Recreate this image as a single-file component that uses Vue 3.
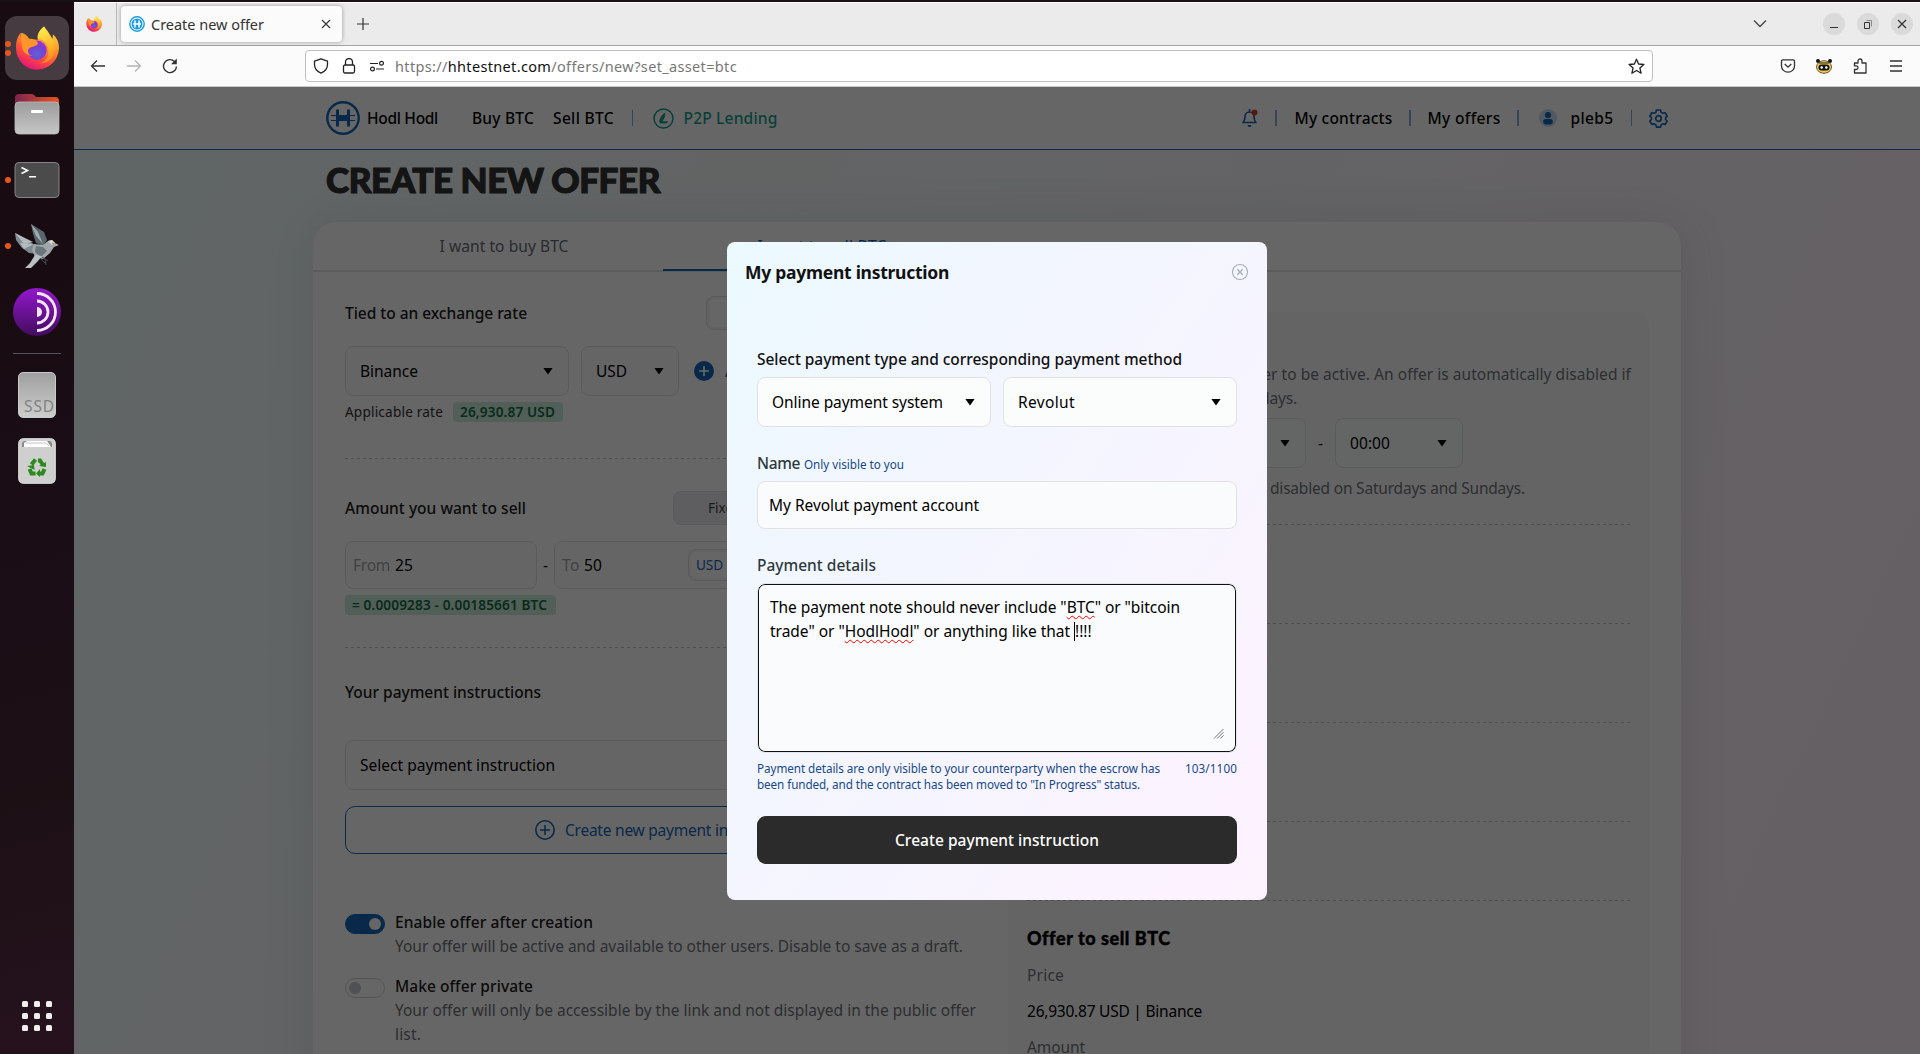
<script setup>
// Tracks a label so that it occupies the given width in pixels.
const vFit = {
  mounted(el, { value }) {
    const natural = el.getBoundingClientRect().width
    const count = el.textContent.length
    el.style.letterSpacing = ((value - natural) / count).toFixed(3) + 'px'
  }
}
const dots = [0, 1, 2, 3, 4, 5, 6, 7, 8]
</script>

<template>
  <div class="desktop">
    <svg width="0" height="0" class="defs">
      <defs>
        <linearGradient id="ffBody" x1="0.8" y1="0" x2="0.3" y2="1">
          <stop offset="0" stop-color="#ffe14a" /><stop offset="0.35" stop-color="#ff9a2a" />
          <stop offset="0.7" stop-color="#ff4a3f" /><stop offset="1" stop-color="#e3117c" />
        </linearGradient>
        <linearGradient id="ffFlame" x1="0.3" y1="0" x2="0.6" y2="1">
          <stop offset="0" stop-color="#fff44f" /><stop offset="0.55" stop-color="#ffc02f" /><stop offset="1" stop-color="#ff8a1f" />
        </linearGradient>
        <radialGradient id="ffGlobe" cx="0.5" cy="0.7" r="0.7">
          <stop offset="0" stop-color="#5a63d8" /><stop offset="0.6" stop-color="#7a3fd0" /><stop offset="1" stop-color="#a033e0" />
        </radialGradient>
        <linearGradient id="folderBack" x1="0" y1="0" x2="1" y2="0">
          <stop offset="0" stop-color="#7c2450" /><stop offset="1" stop-color="#e9541f" />
        </linearGradient>
        <linearGradient id="greyFace" x1="0" y1="0" x2="0" y2="1">
          <stop offset="0" stop-color="#9c9c9c" /><stop offset="1" stop-color="#c6c6c6" />
        </linearGradient>
        <linearGradient id="tor" x1="0" y1="0" x2="0" y2="1">
          <stop offset="0" stop-color="#9318cf" /><stop offset="1" stop-color="#420c5d" />
        </linearGradient>
        <symbol id="firefox" viewBox="0 0 50 50">
          <path d="M33 0c-6 5-8 10-7 15L8 14c-2-2-2-4-1-7C2 11 0 20 2 31c3 11 13 19 24 18 14-1 23-11 24-24 0-7-2-12-7-16 0 3 0 4-1 6-2-7-6-11-9-15z" fill="url(#ffBody)" />
          <path d="M33 0c-5 4-8 9-7 14 8 1 13 8 12 17-1 5-5 10-10 11 11 0 19-8 18-20-1-9-10-14-13-22z" fill="url(#ffFlame)" opacity=".85" />
          <circle cx="25" cy="27" r="11" fill="url(#ffGlobe)" />
          <path d="M7 7c4 1 7 3 9 7 5 0 10 2 10 6-3 4-8 2-11 6-1 4 2 7 6 7-7 1-14-5-13-12C6 16 6 11 7 7z" fill="#ff9429" />
        </symbol>
      </defs>
    </svg>

    <aside class="dock">
      <div class="dock-item">
        <span class="run run-a"></span><span class="run run-b"></span>
        <div class="dock-active"><svg width="44" height="45"><use href="#firefox" /></svg></div>
      </div>
      <div class="dock-item">
        <svg width="46" height="42" viewBox="0 0 46 42">
          <path d="M1 12V5q0-4 4-4h12q2 0 3 1l2 2h19q4 0 4 4v8H1z" fill="url(#folderBack)" />
          <rect x="1" y="9" width="44" height="32" rx="4" fill="url(#greyFace)" stroke="#bdbdbd" stroke-width=".8" />
          <rect x="17" y="17" width="12" height="3" rx="1" fill="#fff" />
        </svg>
      </div>
      <div class="dock-item">
        <span class="run"></span>
        <svg width="46" height="38" viewBox="0 0 46 38">
          <rect x="1" y="1.5" width="44" height="35" rx="4" fill="#4b4b4b" stroke="#858585" />
          <path d="M7.500 6.500l6 3-6 3M15 15.700h7" fill="none" stroke="#fff" stroke-width="1.600" />
        </svg>
      </div>
      <div class="dock-item">
        <span class="run"></span>
        <svg width="44" height="44" viewBox="0 0 44 44">
          <path d="M0 9l20 12 3 9-9-1-4-3-3-2-3-4-3-4z" fill="#7f8a90" />
          <path d="M0 9l18 9-9 2zM5 19l14 1-10 5z" fill="#b3bbbe" />
          <path d="M16 0l13 8 3 8-4 6-7-3-3-9z" fill="#58666d" />
          <path d="M16 0l7 8 5 12-7-8z" fill="#a1abae" />
          <path d="M19 20l9 1 5-4 4-1 3 3 4 2-5 2-4 6-7 6-8-2-3-7z" fill="#9fa7aa" />
          <path d="M21 22l7 1 4 4-6 6-6-5z" fill="#6a757b" />
          <path d="M33 17l4-1 3 3-3 2z" fill="#d7d9d9" />
          <circle cx="38" cy="19.500" r="1" fill="#c58b3c" />
          <path d="M20 31l7 1-4 5-7 7h-6l5-5z" fill="#b7c0c3" />
          <path d="M27 33l6 4M26 35l5 5M30 35l1 6" stroke="#3e4a50" fill="none" />
        </svg>
      </div>
      <div class="dock-item">
        <svg width="48" height="48" viewBox="0 0 48 48">
          <circle cx="24" cy="24" r="24" fill="url(#tor)" />
          <path d="M24 5.500a18.500 18.500 0 010 37M24 13a11 11 0 010 22" fill="none" stroke="#f3e6fb" stroke-width="2.800" />
          <path d="M24 19a5 5 0 010 10z" fill="#f3e6fb" />
        </svg>
      </div>
      <div class="dock-sep"></div>
      <div class="dock-item">
        <div class="ssd"><span v-fit="31">SSD</span></div>
      </div>
      <div class="dock-item">
        <svg width="38" height="46" viewBox="0 0 38 46">
          <rect x=".7" y=".7" width="36.600" height="44.600" rx="4.500" fill="#cfcfcf" stroke="#e2e2e2" />
          <path d="M4 9V6q0-3 3-3h24q3 0 3 3v3z" fill="#8a8a8a" />
          <path d="M6 9V5l3-2h20l4 6z" fill="#fff" /><path d="M8 5h20l3 3" fill="none" stroke="#aaa" stroke-width=".7" />
          <g fill="none" stroke="#2b8a1e" stroke-width="4">
            <path d="M13.500 26.500l4-5" /><path d="M20 22.500h2l3 4.500" />
            <path d="M26.500 31l-2 4.500h-4" /><path d="M17.500 35.500h-4l-2-4.500" />
          </g>
          <path d="M21 28l7 1v-5zM22 31v8l-4-3.500zM9 28l7-1 .5 5z" fill="#2b8a1e" />
        </svg>
      </div>
      <div class="app-grid"><i v-for="d in dots" :key="d"></i></div>
    </aside>

    <div class="window">
      <div class="tabbar">
        <div class="pinned"><svg width="16" height="16"><use href="#firefox" /></svg></div>
        <div class="tab">
          <svg width="16" height="16" viewBox="0 0 16 16"><circle cx="8" cy="8" r="7.200" fill="#fff" stroke="#1d9bdf" stroke-width="1.400" /><circle cx="8" cy="8" r="5.500" fill="#1d9bdf" /><path d="M6 4.500v7M10 4.500v7M4 8h8" stroke="#fff" stroke-width="1.500" /></svg>
          <span class="tab-title"><span v-fit="113">Create new offer</span></span>
          <svg width="10" height="10" viewBox="0 0 10 10" stroke="#333" stroke-width="1.100"><path d="M1 1l8 8M9 1L1 9" /></svg>
        </div>
        <svg class="plus" width="12" height="12" viewBox="0 0 12 12" stroke="#333" stroke-width="1.200"><path d="M6 0v12M0 6h12" /></svg>
        <svg class="all-tabs" width="14" height="10" viewBox="0 0 14 10" fill="none" stroke="#444" stroke-width="1.300"><path d="M1 1.500l6 6 6-6" /></svg>
        <div class="controls">
          <span><svg width="10" height="10" viewBox="0 0 10 10" stroke="#333"><path d="M1 8.500h8" /></svg></span>
          <span><svg width="10" height="10" viewBox="0 0 10 10" fill="none" stroke="#333"><path d="M1.500 3.500h5v6h-5z" /><path d="M3.500 1.500h5v6" stroke="#888" /></svg></span>
          <span><svg width="10" height="10" viewBox="0 0 10 10" stroke="#333" stroke-width="1.200"><path d="M1 1l8 8M9 1L1 9" /></svg></span>
        </div>
      </div>
      <div class="toolbar">
        <div class="nav-icons">
          <svg width="16" height="16" viewBox="0 0 16 16" fill="none" stroke="#333" stroke-width="1.300"><path d="M15 8H1.500M7 2.500L1.500 8 7 13.500" /></svg>
          <svg width="16" height="16" viewBox="0 0 16 16" fill="none" stroke="#b4b4b4" stroke-width="1.300"><path d="M1 8h13.500M9 2.500L14.500 8 9 13.500" /></svg>
          <svg width="16" height="16" viewBox="0 0 16 16"><path d="M14.500 8.500A6.500 6.500 0 1112.500 3.400" fill="none" stroke="#333" stroke-width="1.400" /><path d="M14.800.5v5.800H9z" fill="#333" /></svg>
        </div>
        <div class="urlbar">
          <svg width="16" height="16" viewBox="0 0 16 16" fill="none" stroke="#222" stroke-width="1.300"><path d="M8 .9l6.500 2.200v3.500c0 4-2.500 7-6.500 8.600C4 13.600 1.500 10.600 1.500 6.600V3.100z" stroke-linejoin="round" /></svg>
          <svg width="16" height="16" viewBox="0 0 16 16" fill="none" stroke="#222" stroke-width="1.300"><rect x="2.500" y="7" width="11" height="8" rx="1.500" /><path d="M4.500 7V4a3.500 3.500 0 017 0v3" /></svg>
          <svg width="16" height="16" viewBox="0 0 16 16" fill="none" stroke="#222" stroke-width="1.200"><path d="M1 5.500h8M7 11h8" /><circle cx="12.500" cy="5.300" r="1.900" /><circle cx="3.500" cy="11" r="1.900" /></svg>
          <span class="url"><span v-fit="342">https://<b>hhtestnet.com</b>/offers/new?set_asset=btc</span></span>
          <svg class="star" width="17" height="17" viewBox="0 0 17 17" fill="none" stroke="#222" stroke-width="1.300" stroke-linejoin="round"><path d="M8.500 1.200l2.100 4.800 5.300.5-4 3.500 1.200 5.200-4.600-2.700-4.600 2.700L5.100 10l-4-3.500L6.400 6z" /></svg>
        </div>
        <div class="tools">
          <svg width="16" height="16" viewBox="0 0 16 16" fill="none" stroke="#333" stroke-width="1.300"><path d="M1.500 3q0-1.200 1.200-1.200h10.600q1.200 0 1.200 1.200v5a6.500 6.200 0 01-13 0z" /><path d="M4.700 6L8 9.200 11.300 6" /></svg>
          <svg width="18" height="16" viewBox="0 0 18 16"><circle cx="3" cy="3" r="2" fill="#111" /><circle cx="15" cy="3" r="2" fill="#111" /><ellipse cx="9" cy="9" rx="7.500" ry="6.300" fill="#efc94b" stroke="#222" stroke-width=".7" /><path d="M4 5h10" stroke="#222" /><rect x="3.500" y="6.500" width="11" height="6" rx="3" fill="#111" /><circle cx="6.700" cy="9.500" r="1.300" fill="#fff" /><circle cx="11.300" cy="9.500" r="1.300" fill="#fff" /></svg>
          <svg width="16" height="16" viewBox="0 0 16 16" fill="none" stroke="#333" stroke-width="1.300" stroke-linejoin="round"><path d="M6 5V3a2 2 0 014 0v2h4v10H2.500v-3.500h1.700a1.800 1.800 0 000-3.600H2.500V5z" /></svg>
          <svg width="16" height="16" viewBox="0 0 16 16" stroke="#333" stroke-width="1.300"><path d="M2 3h12M2 8h12M2 13h12" /></svg>
        </div>
      </div>

      <div class="page">
        <header class="site-header">
          <svg class="logo" width="34" height="34" viewBox="0 0 34 34" fill="none" stroke="#1668b8"><circle cx="17" cy="17" r="15.700" stroke-width="2.400" /><path d="M11.500 8.500v17M22.500 8.500v17" stroke-width="3" /><path d="M5 14.500h24M5 19.500h24" stroke-width="1.100" /><path d="M11.500 17h11" stroke-width="4" /></svg>
          <div class="h-cell brand"><span v-fit="71">Hodl Hodl</span></div>
          <div class="h-cell buy"><span v-fit="62">Buy BTC</span></div>
          <div class="h-cell sell"><span v-fit="61">Sell BTC</span></div>
          <i class="bar bar-left"></i>
          <svg class="lend-icon" width="21" height="21" viewBox="0 0 21 21"><circle cx="10.500" cy="10.500" r="9.500" fill="none" stroke="#14a08c" stroke-width="1.500" /><path d="M12.300 4.500c-3 1.500-5.300 5-6 8.200-.3 1.900.7 2.800 2.500 2.800h4.800l1.700-2.300H9.500c1.700-2 3-5 2.800-8.700z" fill="#14a08c" /></svg>
          <div class="h-cell lend"><span v-fit="94">P2P Lending</span></div>
          <svg class="bell" width="18" height="20" viewBox="0 0 18 20"><path d="M2 14.500c2-2 2-4 2-6a4.500 4.500 0 019 0c0 2 0 4 2 6z" fill="none" stroke="#1668b8" stroke-width="1.700" stroke-linejoin="round" /><path d="M6.500 17h4a2 2 0 01-4 0zM7.700 1h1.600v3H7.700z" fill="#1668b8" /><circle cx="13.500" cy="4.500" r="3" fill="#d8422a" /></svg>
          <i class="bar b1"></i>
          <div class="h-cell c1"><span v-fit="98">My contracts</span></div>
          <i class="bar b2"></i>
          <div class="h-cell c2"><span v-fit="73">My offers</span></div>
          <i class="bar b2"></i>
          <svg class="avatar" width="18" height="18" viewBox="0 0 18 18"><circle cx="9" cy="9" r="9" fill="#c9dcf0" /><circle cx="9" cy="6" r="3.100" fill="#1668b8" /><rect x="4.200" y="10" width="9.600" height="5.500" rx="2.750" fill="#1668b8" /></svg>
          <div class="h-cell c3"><span v-fit="43">pleb5</span></div>
          <i class="bar b3"></i>
          <svg class="gear" width="19" height="19" viewBox="0 0 19 19" fill="none" stroke="#1668b8" stroke-width="1.700" stroke-linejoin="round"><path d="M7.500 1h4l.6 2.200 1.900 1.100 2.200-.6 2 3.400L16.600 8.700v1.800l1.600 1.500-2 3.400-2.200-.6-1.900 1.100-.6 2.200h-4l-.6-2.200L5 14.800l-2.200.6-2-3.400 1.600-1.500V8.700L.8 7.100l2-3.400 2.200.6 1.900-1.100z" /><circle cx="9.500" cy="9.500" r="2.800" /></svg>
        </header>

        <h1><span v-fit="334">CREATE NEW OFFER</span></h1>

        <main class="card">
          <nav class="card-tabs">
            <div class="card-tab"><span v-fit="129">I want to buy BTC</span></div>
            <div class="card-tab on"><span v-fit="129">I want to sell BTC</span></div>
          </nav>
          <div class="cols">
            <section class="left">
              <div class="row head">
                <strong><span v-fit="182">Tied to an exchange rate</span></strong>
                <div class="seg rate-seg"></div>
              </div>
              <div class="row selects">
                <div class="select s1"><span v-fit="58">Binance</span><i class="caret"></i></div>
                <div class="select s2"><span v-fit="31">USD</span><i class="caret"></i></div>
                <svg width="20" height="20" viewBox="0 0 20 20"><circle cx="10" cy="10" r="10" fill="#1668b8" /><path d="M10 5v10M5 10h10" stroke="#fff" stroke-width="1.700" /></svg>
                <span class="add">Add</span>
              </div>
              <div class="row rate">
                <span v-fit="98">Applicable rate</span>
                <div class="badge b110"><span v-fit="95">26,930.87 USD</span></div>
              </div>
              <div class="dash d1"></div>
              <div class="row head amount-head">
                <strong><span v-fit="181">Amount you want to sell</span></strong>
                <div class="seg fixed"><span>Fixed</span></div>
              </div>
              <div class="row amounts">
                <div class="field f1"><em v-fit="37">From</em><span v-fit="18">25</span></div>
                <span class="hy">-</span>
                <div class="field f2"><em v-fit="18">To</em><span v-fit="18">50</span><div class="seg usd"><span v-fit="27">USD</span></div></div>
              </div>
              <div class="badge b211"><span v-fit="195">= 0.0009283 - 0.00185661 BTC</span></div>
              <div class="dash d2"></div>
              <div class="line your"><strong><span v-fit="196">Your payment instructions</span></strong></div>
              <div class="select wide"><span v-fit="195">Select payment instruction</span><i class="caret"></i></div>
              <div class="outline-btn">
                <svg width="20" height="20" viewBox="0 0 20 20" fill="none" stroke="#1668b8" stroke-width="1.600"><circle cx="10" cy="10" r="9.200" /><path d="M10 5v10M5 10h10" /></svg>
                <span v-fit="226">Create new payment instruction</span>
              </div>
              <div class="option">
                <div class="toggle active"><i></i></div>
                <div class="opt-text">
                  <div class="line"><strong><span v-fit="198">Enable offer after creation</span></strong></div>
                  <div class="line muted"><span v-fit="568">Your offer will be active and available to other users. Disable to save as a draft.</span></div>
                </div>
              </div>
              <div class="option second">
                <div class="toggle"><i></i></div>
                <div class="opt-text">
                  <div class="line"><strong><span v-fit="138">Make offer private</span></strong></div>
                  <div class="line muted"><span v-fit="581">Your offer will only be accessible by the link and not displayed in the public offer</span></div>
                  <div class="line muted"><span v-fit="26">list.</span></div>
                </div>
              </div>
            </section>

            <section class="right">
              <div class="line muted tail t1"><span v-fit="389">offer to be active. An offer is automatically disabled if</span></div>
              <div class="line muted tail t2"><span v-fit="37">days.</span></div>
              <div class="row hours">
                <div class="select h"><span v-fit="40">00:00</span><i class="caret"></i></div>
                <span class="mid">-</span>
                <div class="select h"><span v-fit="40">00:00</span><i class="caret"></i></div>
              </div>
              <div class="line muted tail t3"><span v-fit="255">disabled on Saturdays and Sundays.</span></div>
              <div class="dash r1"></div>
              <div class="dash r2"></div>
              <div class="dash r2"></div>
              <div class="dash r2"></div>
              <div class="dash r3"></div>
              <h2><span v-fit="143">Offer to sell BTC</span></h2>
              <div class="line muted pair"><span v-fit="37">Price</span></div>
              <div class="line pair"><span v-fit="175">26,930.87 USD | Binance</span></div>
              <div class="line muted pair"><span v-fit="58">Amount</span></div>
            </section>
          </div>
        </main>

        <div class="overlay">
          <div class="modal">
            <div class="modal-head">
              <h3><span v-fit="204">My payment instruction</span></h3>
              <svg width="18" height="18" viewBox="0 0 18 18" fill="none" stroke="#a9b0ba" stroke-width="1.200"><circle cx="9" cy="9" r="7.500" /><path d="M6.300 6.300l5.400 5.400M11.700 6.300l-5.400 5.400" stroke-width="1.400" /></svg>
            </div>
            <div class="form">
              <div class="line label"><span v-fit="425">Select payment type and corresponding payment method</span></div>
              <div class="row pick">
                <div class="select"><span v-fit="171">Online payment system</span><i class="caret"></i></div>
                <div class="select"><span v-fit="57">Revolut</span><i class="caret"></i></div>
              </div>
              <div class="line label soft name"><span v-fit="43">Name</span><small><span v-fit="100">Only visible to you</span></small></div>
              <div class="field input"><span v-fit="210">My Revolut payment account</span></div>
              <div class="line label soft details"><span v-fit="119">Payment details</span></div>
              <div class="textarea">
                <div class="line"><span v-fit="410">The payment note should never include "<u>BTC</u>" or "bitcoin</span></div>
                <div class="line"><span v-fit="304">trade" or "<u>HodlHodl</u>" or anything like that </span><b class="cursor"></b><span v-fit="16.5">!!!!</span></div>
                <svg class="grip" width="11" height="11" viewBox="0 0 12 12" stroke="#666"><path d="M1 11.500L11.500 1M4.500 11.500l7-7M8 11.500L11.500 8" /></svg>
              </div>
              <div class="help">
                <div>
                  <div class="help-line"><span v-fit="403">Payment details are only visible to your counterparty when the escrow has</span></div>
                  <div class="help-line"><span v-fit="383">been funded, and the contract has been moved to "In Progress" status.</span></div>
                </div>
                <div class="help-line"><span v-fit="52">103/1100</span></div>
              </div>
              <div class="submit"><span v-fit="204">Create payment instruction</span></div>
            </div>
          </div>
        </div>
      </div>
    </div>
  </div>
</template>

<style>
html, body { margin: 0; background: #1a0e15; overflow: hidden; }
</style>

<style scoped>
* { box-sizing: border-box; }
.desktop { display: flex; width: 1920px; height: 1054px; padding-top: 2px; background: #171314; overflow: hidden; font-family: "Noto Sans", "Open Sans", sans-serif; font-size: 15.5px; line-height: 24px; color: #111; white-space: nowrap; }
.desktop svg { display: block; flex: none; }
.desktop .defs { position: absolute; }
span { white-space: pre; }
.row { display: flex; align-items: center; }

.dock { width: 74px; flex: none; display: flex; flex-direction: column; padding-top: 13px; background: linear-gradient(165deg, #180c12 0 25%, #1a0d16 50%, #1c1015 75%, #26121d); }
.dock-item { position: relative; height: 66px; display: flex; align-items: center; justify-content: center; }
.dock-active { width: 64px; height: 64px; border-radius: 12px; background: #453b41; display: flex; align-items: center; justify-content: center; }
.run { position: absolute; z-index: 1; left: 5px; top: 30px; width: 6px; height: 6px; border-radius: 50%; background: #e9541f; }
.run-a { top: 26px; }
.run-b { top: 35px; }
.dock-sep { height: 1px; margin: 8px 13px; background: #59515a; }
.ssd { width: 38px; height: 46px; border-radius: 5px; border: 1px solid #c9c9c9; background: linear-gradient(#a0a0a0, #cdcdcd); display: flex; align-items: flex-end; justify-content: flex-end; font-size: 15.500px; line-height: 22px; color: #838383; }
.app-grid { display: grid; grid-template-columns: repeat(3, 6px); gap: 6px; margin: auto 0 23px 22px; }
.app-grid i { width: 6px; height: 6px; border-radius: 1.5px; background: #f0efed; }

.window { flex: 1; display: flex; flex-direction: column; min-width: 0; }
.tabbar { height: 44px; flex: none; display: flex; align-items: center; background: #ebebeb; border-top: 1px solid #fff; border-bottom: 1px solid #a4a4a4; }
.pinned { width: 43px; height: 100%; border-right: 1px solid #b9b9b9; display: flex; align-items: center; padding-left: 12px; }
.tab { width: 221px; height: 36px; margin-left: 4px; padding: 0 11px 0 8px; border-radius: 4px; background: #fbfbfb; box-shadow: 0 0 4px rgba(0,0,0,.35); display: flex; align-items: center; }
.tab-title { flex: 1; margin-left: 6px; font-size: 14.5px; color: #333; }
.plus { margin-left: 15px; }
.all-tabs { margin-left: auto; }
.controls { display: flex; gap: 12px; margin: 0 7px 0 56px; }
.controls span { width: 22px; height: 22px; border-radius: 50%; background: #dadada; display: flex; align-items: center; justify-content: center; }
.toolbar { height: 41px; flex: none; display: flex; align-items: center; background: #fbfbfb; border-bottom: 1px solid #c8c8c8; }
.nav-icons { display: flex; gap: 20px; margin-left: 16px; }
.urlbar { width: 1348px; height: 32px; margin-left: 127px; padding: 0 7px; border: 1px solid #bfbfbf; border-radius: 4px; background: #fff; display: flex; align-items: center; gap: 12px; }
.url { margin-left: -2px; font-size: 14.5px; color: #777; }
.url b { font-weight: 400; color: #111; }
.star { margin-left: auto; }
.tools { display: flex; gap: 20px; margin-left: auto; margin-right: 16px; }
.tools svg:nth-child(2) { margin: 0 -1px; }

.page { position: relative; flex: 1; min-height: 0; overflow: hidden; background: linear-gradient(115deg, #f0fefe 0%, #f3fcfc 18%, #f6fafb 32%, #f8f8fd 55%, #fdf1f9 90%); }
.site-header { height: 63px; background: #fff; border-bottom: 1px solid #1668b8; display: flex; align-items: center; font-weight: 500; color: #000; }
.logo { margin-left: 252px; }
.h-cell { display: flex; }
.brand { width: 71px; margin-left: 7px; }
.buy { width: 62px; margin-left: 34px; }
.sell { width: 61px; margin-left: 19px; }
.bar { width: 1.5px; height: 16px; background: #85b0dc; }
.bar-left { margin-left: 17.5px; }
.lend-icon { margin-left: 19.5px; }
.lend { width: 94px; margin-left: 10px; color: #14a08c; }
.bell { margin-left: 463px; }
.b1 { margin-left: 16.5px; }
.c1 { width: 98px; margin-left: 18px; }
.c2 { width: 73px; margin-left: 17px; }
.b2 { margin-left: 16.5px; }
.b3 { margin-left: 17px; }
.avatar { margin-left: 20px; }
.c3 { width: 43px; margin-left: 14px; }
.gear { margin-left: 17px; }

h1 { margin: 9px 0 0 252px; height: 40px; font: 900 35px/40px Lato, sans-serif; color: #333; -webkit-text-stroke: 1.2px #333; }
.card { width: 1368px; height: 900px; margin: 23px 0 0 239px; border-radius: 24px 24px 0 0; background: #fff; box-shadow: 0 0 50px rgba(60,70,110,.12); }
.card-tabs { height: 50px; padding-left: 32px; border-bottom: 2px solid #e4e4e6; display: flex; }
.card-tab { width: 318px; height: 49px; padding-bottom: 2px; display: flex; align-items: center; justify-content: center; color: #666c77; }
.card-tab.on { padding-bottom: 0; color: #1668b8; border-bottom: 2px solid #1668b8; }
.cols { display: flex; padding-left: 32px; }
.left { width: 636px; }
strong { font-weight: 500; color: #1a1a1a; }
.head { height: 34px; margin-top: 24px; justify-content: space-between; }
.seg { height: 34px; border: 1.5px solid #e0e0e6; border-radius: 8px; background: #fff; box-shadow: inset 0 0 0 2px #f6f6f8; }
.rate-seg { width: 275px; }
.selects { margin-top: 16px; }
.select { height: 50px; padding: 0 15px; border: 1px solid #e2e2e4; border-radius: 8px; background: #fbfcfc; display: flex; align-items: center; justify-content: space-between; color: #000; }
.selects .select, .wide, .amounts .field { background: #fdfdfd; }
.caret { width: 10px; height: 7px; background: #000; clip-path: polygon(0 0, 100% 0, 50% 100%); }
.s1 { width: 224px; padding-left: 14px; }
.s2 { width: 98px; margin: 0 15px 0 12px; padding: 0 14px; }
.add { margin-left: 11px; color: #1668b8; }
.rate { height: 20px; margin-top: 6px; font-size: 13.600px; color: #333; }
.badge { height: 20px; padding-left: 7px; border-radius: 4px; background: #cdeadd; color: #156e45; font-weight: 600; font-size: 13.6px; line-height: 20px; }
.b110 { width: 110px; margin-left: 10px; }
.b211 { width: 211px; margin-top: 6px; }
.dash { height: 1px; background: repeating-linear-gradient(90deg, #c5c5c9 0 3px, transparent 3px 6px); }
.d1 { margin-top: 36px; }
.amount-head { margin-top: 32px; }
.fixed { width: 308px; padding-left: 34px; line-height: 31px; font-size: 13.6px; background: #ececf2; box-shadow: none; color: #444; }
.amounts { margin-top: 16px; }
.field { height: 48px; border: 1px solid #e2e2e4; border-radius: 8px; display: flex; align-items: center; color: #000; }
.field em { font-style: normal; color: #a4a4a8; margin: 0 4px 0 7px; }
.f1 { width: 192px; }
.f1 em { margin-right: 5px; }
.f2 { width: 427px; }
.hy { width: 17px; text-align: center; }
.usd { margin-left: 86px; width: 60px; height: 32px; padding-left: 7px; line-height: 29px; color: #1668b8; font-size: 13.6px; }
.d2 { margin-top: 32px; }
.line { height: 24px; display: flex; }
.your { margin-top: 32px; }
.wide { margin-top: 36px; padding-left: 14px; }
.outline-btn { height: 48px; margin-top: 16px; border: 1px solid #1668b8; border-radius: 10px; display: flex; align-items: center; justify-content: center; gap: 10px; color: #1668b8; }
.option { display: flex; margin-top: 56px; }
.second { margin-top: 16px; }
.opt-text { margin-left: 10px; }
.toggle { width: 40px; height: 20px; margin-top: 4px; padding: 3px; border: 1px solid #d3d3d8; border-radius: 10px; }
.toggle i { display: block; width: 12px; height: 12px; border-radius: 50%; background: #c9cad2; }
.toggle.active { background: #1668b8; border-color: #1668b8; }
.toggle.active i { margin-left: 20px; background: #fff; }
.muted { color: #70747b; }
.right { width: 641px; height: 830px; margin: 40px 0 0 27px; padding: 0 18px 0 19px; border-radius: 12px; background: #fbfbfc; }
.tail { justify-content: flex-end; }
.t1 { margin-top: 50px; }
.t2 { padding-right: 334px; }
.hours { margin-top: 8px; justify-content: flex-end; padding-right: 168px; }
.select.h { width: 128px; padding-left: 14px; }
.mid { width: 29px; text-align: center; }
.t3 { padding-right: 106px; margin-top: 8px; }
.r1 { margin-top: 24px; }
.r2 { margin-top: 98px; }
.r3 { margin-top: 78px; }
h2 { margin: 23px 0 0; height: 28px; font: 900 18px/28px Lato, sans-serif; color: #000; -webkit-text-stroke: .4px #000; }
.pair { margin-top: 12px; color: #000; }
.pair.muted { color: #70747b; }
h2 + .pair { margin-top: 11px; }

.overlay { position: absolute; inset: 0; background: rgba(0,0,0,.6); }
.modal { position: absolute; left: 653px; top: 155px; width: 540px; height: 658px; border-radius: 8px; padding: 16px 18px; background: linear-gradient(125deg, #ebfaff 0%, #f1f6ff 28%, #f6f5ff 60%, #fbf3ff 85%, #fcf3ff 100%); }
.modal-head { display: flex; justify-content: space-between; align-items: center; }
h3 { margin: 0; height: 28px; font-size: 17.500px; line-height: 28px; font-weight: 700; }
.form { padding: 61px 12px 0; }
.label { font-weight: 500; color: #111; }
.soft { color: #2d3a3c; }
.pick { gap: 12px; margin-top: 6px; }
.pick .select { flex: 1; padding: 0 15px 0 14px; }
.name, .details { margin-top: 24px; }
small { font-size: 11.700px; font-weight: 400; color: #174a86; margin-left: 4px; line-height: 26px; }
.input { margin-top: 6px; padding-left: 11px; background: #fafbfc; }
.textarea { position: relative; height: 170px; margin-top: 6px; padding: 11px 0 0 12px; border: 1px solid #e2e6ea; border-radius: 8px; background: #fafbfc; box-shadow: inset 0 0 0 1px #111; color: #000; }
.textarea u { text-decoration: underline wavy #f00 1px; text-underline-offset: 2px; text-decoration-skip-ink: none; }
.cursor { width: 1px; height: 19px; margin-top: 3px; background: #000; }
.grip { position: absolute; right: 12px; bottom: 13px; }
.help { display: flex; justify-content: space-between; margin-top: 7px; font-size: 11.700px; color: #174a86; }
.help-line { height: 16px; line-height: 16px; display: flex; }
.submit { height: 48px; margin-top: 24px; border-radius: 9px; background: #2b2b2b; color: #fff; font-weight: 500; display: flex; align-items: center; justify-content: center; }
</style>
